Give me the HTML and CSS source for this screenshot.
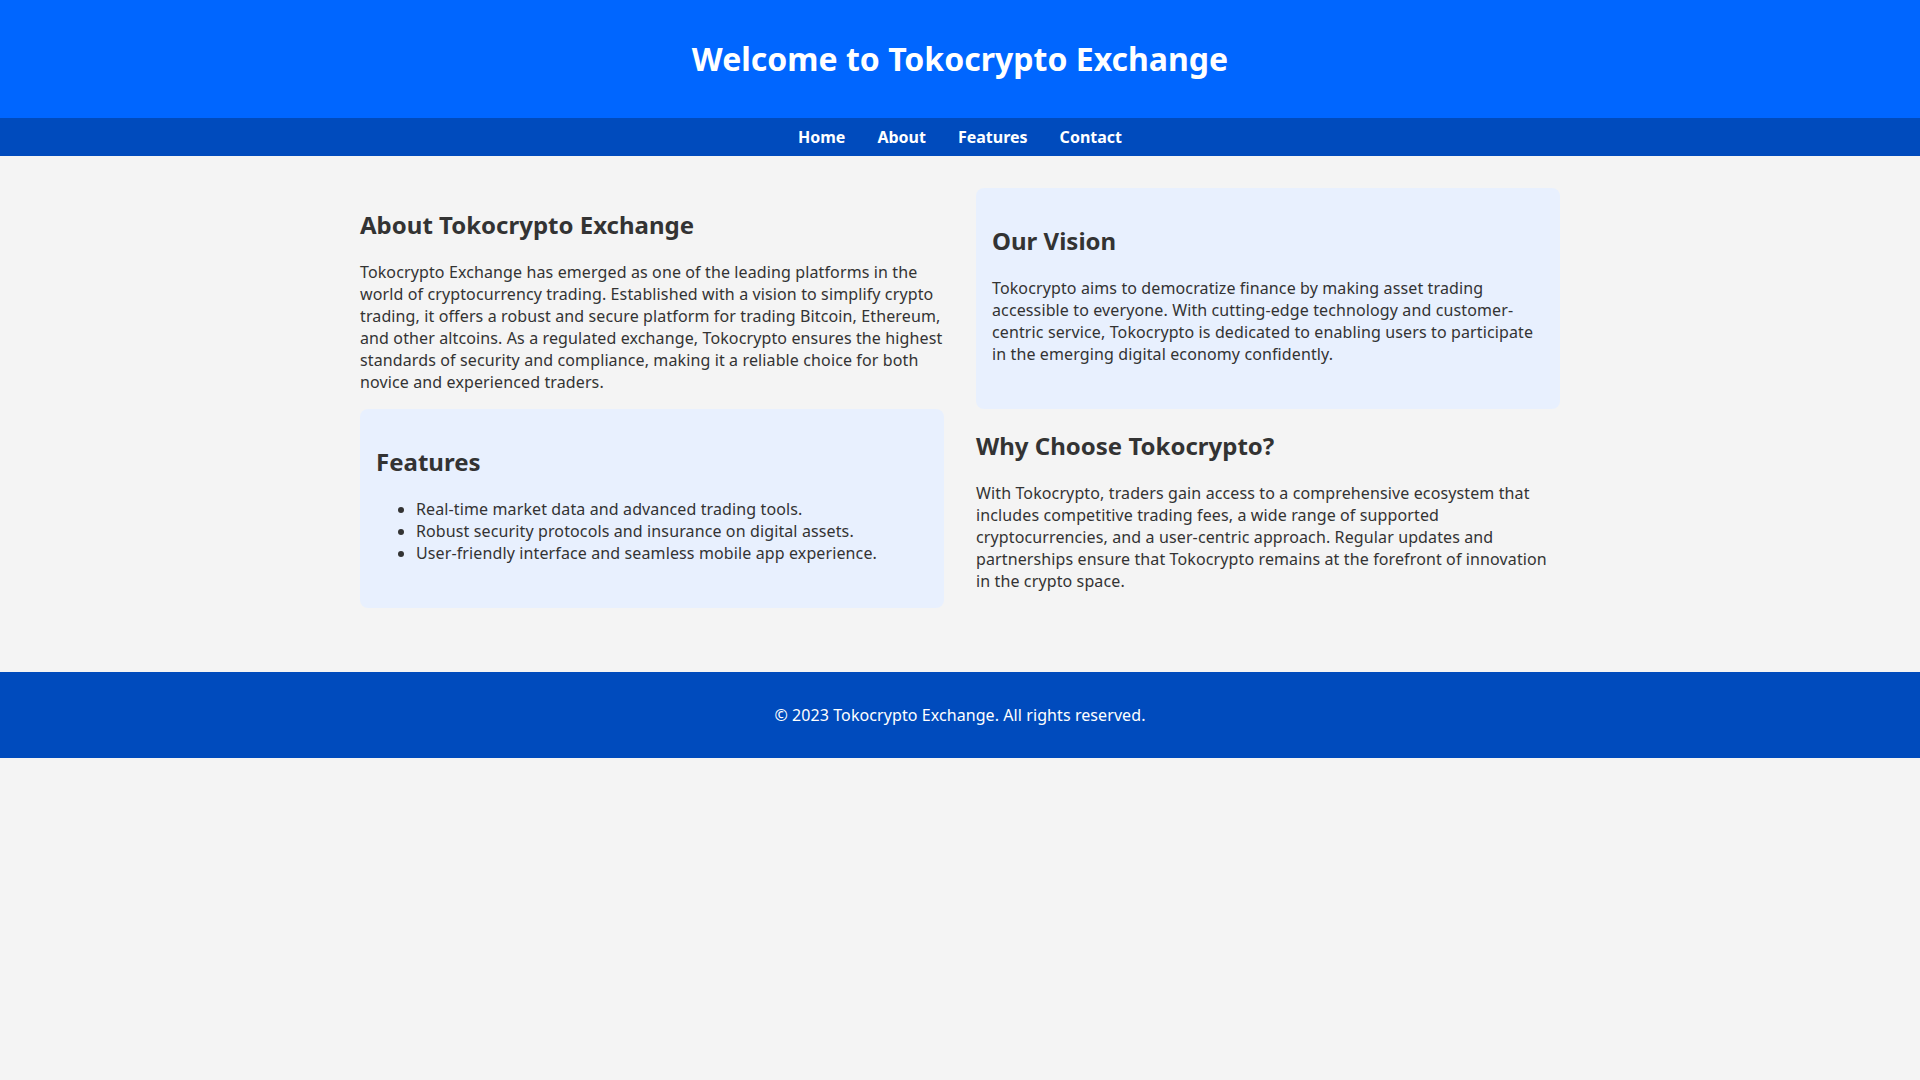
FILE: index.html
```html
<!DOCTYPE html>
<html lang="en">
<head>
<meta charset="utf-8">
<title>Tokocrypto Exchange</title>
<link rel="stylesheet" href="styles.css">
</head>
<body>
<header class="site-header">
  <h1 class="site-title">Welcome to Tokocrypto Exchange</h1>
</header>
<nav class="site-nav">
  <a href="#home">Home</a>
  <a href="#about">About</a>
  <a href="#features">Features</a>
  <a href="#contact">Contact</a>
</nav>
<main class="content">
  <section class="section" id="about">
    <h2>About Tokocrypto Exchange</h2>
    <p>Tokocrypto Exchange has emerged as one of the leading platforms in the world of cryptocurrency trading. Established with a vision to simplify crypto trading, it offers a robust and secure platform for trading Bitcoin, Ethereum, and other altcoins. As a regulated exchange, Tokocrypto ensures the highest standards of security and compliance, making it a reliable choice for both novice and experienced traders.</p>
  </section>
  <section class="section card">
    <h2>Our Vision</h2>
    <p>Tokocrypto aims to democratize finance by making asset trading accessible to everyone. With cutting-edge technology and customer-centric service, Tokocrypto is dedicated to enabling users to participate in the emerging digital economy confidently.</p>
  </section>
  <section class="section card" id="features">
    <h2>Features</h2>
    <ul>
      <li>Real-time market data and advanced trading tools.</li>
      <li>Robust security protocols and insurance on digital assets.</li>
      <li>User-friendly interface and seamless mobile app experience.</li>
    </ul>
  </section>
  <section class="section">
    <h2>Why Choose Tokocrypto?</h2>
    <p>With Tokocrypto, traders gain access to a comprehensive ecosystem that includes competitive trading fees, a wide range of supported cryptocurrencies, and a user-centric approach. Regular updates and partnerships ensure that Tokocrypto remains at the forefront of innovation in the crypto space.</p>
  </section>
</main>
<footer class="site-footer" id="contact">
  &copy; 2023 Tokocrypto Exchange. All rights reserved.
</footer>
</body>
</html>
```

FILE: styles.css
```css
html, body {
  margin: 0;
  padding: 0;
}
body {
  background: #f4f4f4;
  color: #333333;
  font-family: "Noto Sans", "Open Sans", sans-serif;
  font-size: 16px;
}
.site-header {
  background: #0066ff;
  color: #ffffff;
  text-align: center;
  padding: 16px 0;
}
.site-title {
  margin: 21.44px 0;
  font-size: 32px;
  font-weight: 700;
}
.site-nav {
  background: #004bbd;
  display: flex;
  justify-content: center;
  padding: 8px 0;
}
.site-nav a {
  color: #ffffff;
  text-decoration: none;
  font-weight: 700;
  margin: 0 16px;
}
.content {
  width: 1200px;
  margin: 0 auto;
  padding: 32px 0 64px;
  display: grid;
  grid-template-columns: 1fr 1fr;
  column-gap: 32px;
  row-gap: 0;
}
.section h2 {
  font-size: 24px;
  margin: 19.92px 0;
}
.section p, .section ul {
  margin: 16px 0;
  letter-spacing: 0.12px;
}
.card {
  background: #e8f0fe;
  border-radius: 8px;
  padding: 0 16px;
  display: flow-root;
}
.card h2 {
  margin-top: 35.92px;
}
.card p:last-child, .card ul:last-child {
  margin-bottom: 32px;
}
.section ul {
  padding-left: 40px;
}
.site-footer {
  background: #004bbd;
  color: #ffffff;
  text-align: center;
  padding: 32px 0;
  letter-spacing: 0.08px;
}
```
